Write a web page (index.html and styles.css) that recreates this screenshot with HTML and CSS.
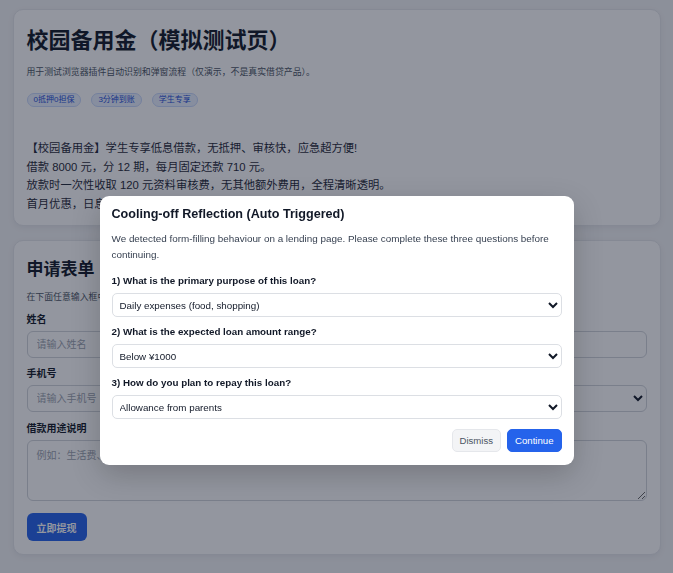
FILE: index.html
```html
<!DOCTYPE html>
<html lang="zh-CN">
<head>
  <meta charset="utf-8">
  <title>校园备用金（模拟测试页）</title>
  <link rel="stylesheet" href="styles.css">
</head>
<body>
  <div class="page">
    <section class="card hero">
      <h1>校园备用金（模拟测试页）</h1>
      <p class="sub">用于测试浏览器插件自动识别和弹窗流程（仅演示，不是真实借贷产品）。</p>
      <div class="tags">
        <span class="tag">0抵押0担保</span>
        <span class="tag">3分钟到账</span>
        <span class="tag">学生专享</span>
      </div>
      <div class="promo">
        <p>【校园备用金】学生专享低息借款，无抵押、审核快，应急超方便!</p>
        <p>借款 8000 元，分 12 期，每月固定还款 710 元。</p>
        <p>放款时一次性收取 120 元资料审核费，无其他额外费用，全程清晰透明。</p>
        <p>首月优惠，日息低至 0.03%，新用户首借免息 7 天。</p>
      </div>
    </section>

    <section class="card form-card">
      <h2>申请表单</h2>
      <p class="sub">在下面任意输入框中输入内容，插件会自动识别借贷页面并弹出冷静期问卷。</p>
      <form id="apply-form">
        <div class="form-group">
          <label for="name">姓名</label>
          <input type="text" id="name" placeholder="请输入姓名">
        </div>

        <div class="form-row">
          <div class="form-group">
            <label for="phone">手机号</label>
            <input type="tel" id="phone" placeholder="请输入手机号">
          </div>
          <div class="form-group">
            <label for="amount">借款金额</label>
            <select id="amount">
              <option>8000 元（分 12 期）</option>
              <option>5000 元（分 6 期）</option>
            </select>
          </div>
        </div>

        <div class="form-group usage">
          <label for="usage">借款用途说明</label>
          <textarea id="usage" placeholder="例如：生活费、学习用品、旅游等"></textarea>
        </div>

        <button type="submit" class="btn-apply">立即提现</button>
      </form>
    </section>
  </div>

  <!-- cooling-off popup injected by the extension -->
  <div class="overlay">
    <div class="modal">
      <h3>Cooling-off Reflection (Auto Triggered)</h3>
      <p class="modal-desc">We detected form-filling behaviour on a lending page. Please complete these three questions before continuing.</p>

      <label class="q" for="q1">1) What is the primary purpose of this loan?</label>
      <select id="q1">
        <option>Daily expenses (food, shopping)</option>
        <option>Tuition or study materials</option>
      </select>

      <label class="q" for="q2">2) What is the expected loan amount range?</label>
      <select id="q2">
        <option>Below ¥1000</option>
        <option>¥1000 - ¥5000</option>
      </select>

      <label class="q" for="q3">3) How do you plan to repay this loan?</label>
      <select id="q3">
        <option>Allowance from parents</option>
        <option>Part-time job</option>
      </select>

      <div class="modal-actions">
        <button type="button" class="btn-dismiss">Dismiss</button>
        <button type="button" class="btn-continue">Continue</button>
      </div>
    </div>
  </div>
</body>
</html>
```

FILE: styles.css
```css
body {
  margin: 0;
  background-color: #f3f4f6;
  font-family: "Liberation Sans", "Noto Sans CJK SC", sans-serif;
  color: #111827;
}

.page {
  max-width: 648px;
  margin: 0 auto;
  padding: 9px 0 20px;
}

.card {
  background-color: #fff;
  border: 1px solid #e5e7eb;
  border-radius: 10px;
  box-shadow: 0 2px 6px rgba(15, 23, 42, 0.06);
  padding: 16px 13px 12px;
  margin-bottom: 14px;
}

.hero h1 {
  font-size: 22px;
  line-height: 30px;
  margin: 0;
}

.sub {
  font-size: 8.9px;
  line-height: 14px;
  color: #4b5563;
  margin: 9px 0 0;
}

.tags {
  display: flex;
  gap: 10px;
  margin-top: 14px;
}

.tag {
  font-size: 8px;
  line-height: 12px;
  padding: 0 6px;
  border-radius: 8px;
  border: 1px solid #c7d7fb;
  background-color: #eaf1ff;
  color: #1d4ed8;
}

.promo {
  margin-top: 32px;
}

.promo p {
  margin: 0;
  font-size: 11.3px;
  line-height: 18.5px;
  color: #1f2937;
}

.form-card {
  padding-top: 18px;
  padding-bottom: 13px;
}

.form-card h2 {
  font-size: 17px;
  line-height: 22px;
  margin: 0;
}

.form-card .sub {
  margin-top: 9px;
}

#apply-form {
  padding-top: 1px;
}

.form-group {
  margin-top: 8px;
  flex: 1;
}

.form-row .form-group {
  margin-top: 9px;
}

.form-group.usage {
  margin-top: 10px;
}

.form-row {
  display: flex;
  gap: 12px;
}

.form-group label {
  display: block;
  font-size: 10px;
  line-height: 14px;
  font-weight: bold;
  margin-bottom: 4px;
}

.form-group input,
.form-group select,
.form-group textarea {
  box-sizing: border-box;
  width: 100%;
  height: 27px;
  padding: 0 9px;
  border: 1px solid #d1d5db;
  border-radius: 6px;
  background-color: #fff;
  font-family: inherit;
  font-size: 10px;
  color: #111827;
}

.form-group textarea {
  height: 61px;
  padding: 6px 9px;
  display: block;
}

::placeholder {
  color: #9ca3af;
}

.btn-apply {
  margin-top: 12px;
  height: 28px;
  padding: 0 10px;
  border: none;
  border-radius: 6px;
  background-color: #2563eb;
  color: #fff;
  font-family: inherit;
  font-size: 10px;
  font-weight: bold;
}

.overlay {
  position: fixed;
  inset: 0;
  background-color: rgba(15, 23, 42, 0.45);
  display: flex;
  justify-content: center;
  align-items: flex-start;
  padding-top: 196px;
}

.modal {
  width: 474px;
  box-sizing: border-box;
  background-color: #fff;
  border-radius: 9px;
  padding: 10px 12px 13px;
  box-shadow: 0 10px 30px rgba(0, 0, 0, 0.2);
  font-family: "Liberation Sans", Arial, sans-serif;
}

.modal h3 {
  margin: 0;
  font-size: 12.6px;
  line-height: 16px;
}

.modal-desc {
  margin: 9px 0 0;
  font-size: 9.9px;
  line-height: 16px;
  color: #374151;
}

.modal .q {
  display: block;
  margin: 8px 0 6px;
  font-size: 9.8px;
  line-height: 13px;
  font-weight: bold;
}

.modal-desc + .q {
  margin-top: 11px;
}

.modal select {
  width: 100%;
  height: 24px;
  padding: 0 3px;
  border: 1px solid #dcdfe4;
  border-radius: 5px;
  background-color: #fff;
  font-family: inherit;
  font-size: 9.8px;
  color: #111827;
}

.modal-actions {
  display: flex;
  justify-content: flex-end;
  gap: 6px;
  margin-top: 10px;
}

.modal-actions button {
  height: 23px;
  padding: 0 7px;
  border-radius: 5px;
  font-family: inherit;
  font-size: 9.6px;
}

.btn-dismiss {
  border: 1px solid #e5e7eb;
  background-color: #f3f4f6;
  color: #4b5563;
  padding: 0 8px;
}

.btn-continue {
  border: 1px solid #2563eb;
  background-color: #2563eb;
  color: #fff;
}
```
